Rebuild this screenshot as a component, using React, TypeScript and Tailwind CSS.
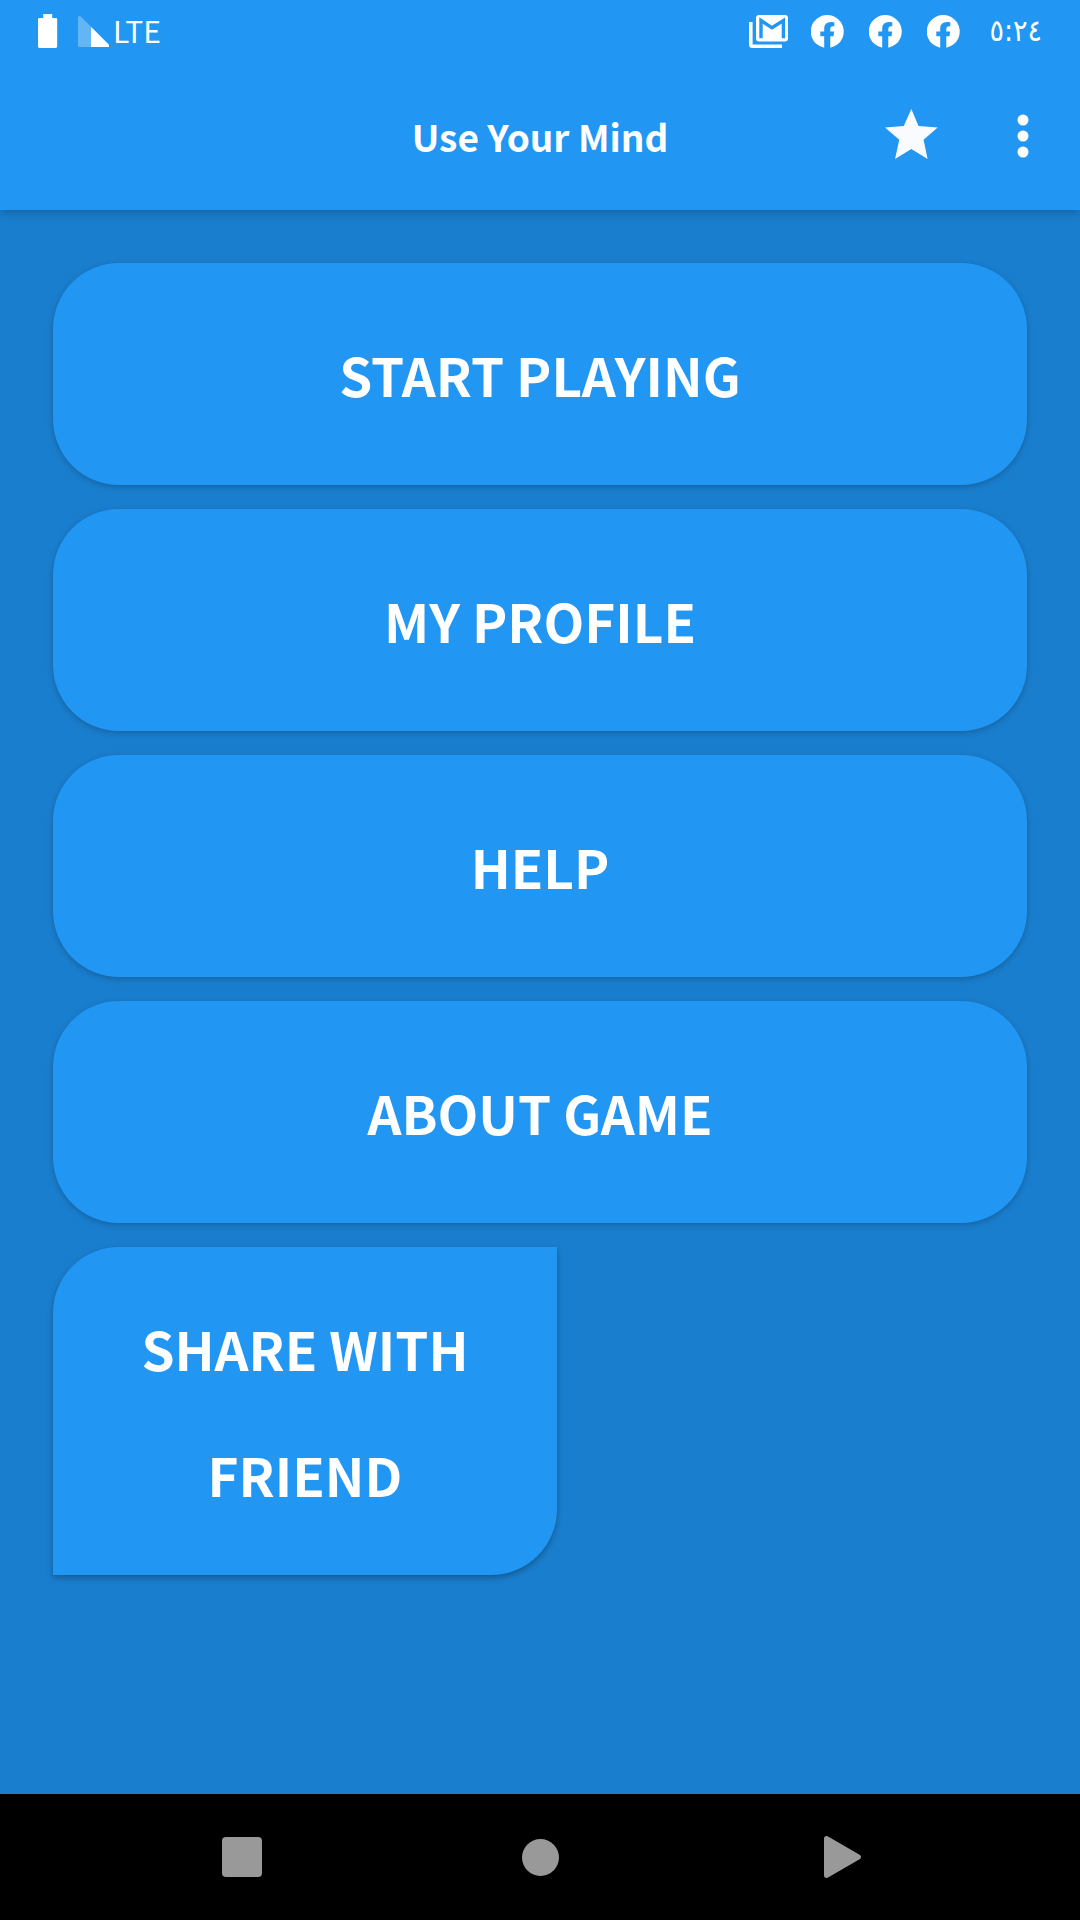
import React from 'react';

interface MenuItem {
  key: string;
  label: string;
}

const menuItems: MenuItem[] = [
  { key: 'play', label: 'START PLAYING' },
  { key: 'profile', label: 'MY PROFILE' },
  { key: 'help', label: 'HELP' },
  { key: 'about', label: 'ABOUT GAME' },
];

const notifications = ['first', 'second', 'third'];

const BatteryIcon = () => (
  <svg viewBox="0 0 20 34" className="w-5 h-[34px] fill-white" aria-hidden="true">
    <path d="M5.2 0h9v4h3.6q1.4 0 1.4 1.4v27.2q0 1.4-1.4 1.4H1.4Q0 34 0 32.600V5.400Q0 4 1.400 4h3.800z" />
  </svg>
);

const SignalIcon = () => (
  <svg viewBox="0 0 31 31" className="w-[31px] h-[31px] fill-white" aria-hidden="true">
    <path d="M0 1.500Q0 0 1.500 0Q2.300 0 3 .7L13 10.700V31H1.500Q0 31 0 29.500z" opacity="0.3" />
    <path d="M13 10.700L30.500 28.200Q31 28.800 31 29.500V31H13z" />
  </svg>
);

const MailStackIcon = () => (
  <svg viewBox="0 0 39 33" className="w-[39px] h-[33px]" aria-hidden="true">
    <path d="M1.800 7v22.500q0 1.700 1.700 1.700H33" fill="none" stroke="white" strokeWidth="3.600" />
    <rect x="7" width="32" height="26.500" rx="3" fill="white" />
    <path d="M12 23.300V5.500L23 12.800L34.400 5.500V23.300" fill="none" stroke="#2196f3" strokeWidth="3.400" />
  </svg>
);

const FacebookIcon = () => (
  <svg viewBox="0 0 33 33" className="w-[33px] h-[33px] fill-white" aria-hidden="true">
    <path d="M13.200 32.700A16.500 16.500 0 1 1 19.300 32.700V21.200H22.500L23.200 16.600H19.300V14.200Q19.300 11.300 22 11.300H23.300V7.200Q21.800 6.900 20 6.900Q13.200 6.900 13.200 13.600V16.600H9.300V21.200H13.200z" />
  </svg>
);

const StatusBar = () => (
  <div className="h-[63px] px-[38px] pb-3 flex items-end justify-between">
    <div className="h-10 flex items-center">
      <BatteryIcon />
      <span className="ml-5">
        <SignalIcon />
      </span>
      <span className="ml-1 pb-[2px] text-[30px] leading-9 font-['Noto_Sans_CJK_SC',sans-serif]">LTE</span>
    </div>
    <div className="h-10 flex items-center">
      <MailStackIcon />
      <div className="ml-[23px] mr-[29px] flex gap-[25px]">
        {notifications.map((id) => (
          <FacebookIcon key={id} />
        ))}
      </div>
      <time className="text-[30px] leading-9 font-['DejaVu_Sans_Condensed','DejaVu_Sans',sans-serif]">٥:٢٤</time>
    </div>
  </div>
);

const AppBar = () => (
  <div className="h-[147px] px-8 grid grid-cols-[1fr_auto_1fr] items-center">
    <h1 className="col-start-2 pb-[2px] text-[37px] leading-[48px] font-bold">Use Your Mind</h1>
    <div className="pb-[2px] flex items-center justify-end gap-[60px]">
      <button type="button" aria-label="Rate" className="w-[54px] h-[54px] flex justify-center">
        <svg viewBox="136 89 158 149" className="w-[53px] h-[50px] fill-[#fafbff]">
          <path d="M214.500 89L236 140L293 144L251 181L263 238L214.500 208L166 238L178.500 181L136 144L192 140z" />
        </svg>
      </button>
      <button type="button" aria-label="More options" className="w-[50px] h-[54px] flex items-center justify-center">
        <svg viewBox="0 0 12 44" className="w-3 h-11 fill-white">
          <circle cx="6" cy="6" r="5.500" />
          <circle cx="6" cy="22" r="5.500" />
          <circle cx="6" cy="38" r="5.500" />
        </svg>
      </button>
    </div>
  </div>
);

const NavigationBar = () => (
  <nav className="h-[126px] bg-black flex items-center justify-center gap-[198px]">
    <button type="button" aria-label="Recent apps" className="w-[100px] h-20 flex items-center justify-center">
      <span className="w-10 h-10 rounded-[4px] bg-[#999999]" />
    </button>
    <button type="button" aria-label="Home" className="w-[100px] h-20 flex items-center justify-center">
      <span className="w-[37px] h-[37px] rounded-full bg-[#999999]" />
    </button>
    <button type="button" aria-label="Back" className="w-[100px] h-20 flex items-center justify-center">
      <svg viewBox="-10 0 48 42" className="w-12 h-[42px] fill-[#999999]">
        <path d="M0 3Q0 0 2.500 0Q3.500 0 4.500 .8L36 19Q38 21 36 23L4.500 41.200Q3.500 42 2.500 42Q0 42 0 39z" />
      </svg>
    </button>
  </nav>
);

const App: React.FC = () => {
  return (
    <div className="min-h-screen flex flex-col bg-[#1a7ece] text-white font-['Noto_Sans_CJK_SC',sans-serif]">
      <header className="bg-[#2196f3] shadow-[0_2px_10px_rgba(0,0,0,0.25)]">
        <StatusBar />
        <AppBar />
      </header>

      <main className="flex-1 px-[53px] pt-[53px] pb-6 flex flex-col gap-6">
        {menuItems.map((item) => (
          <button
            key={item.key}
            type="button"
            className="h-[222px] rounded-[66px] bg-[#2196f3] shadow-[0_2px_6px_rgba(0,0,0,0.22)] text-[53px] leading-[126px] font-bold"
          >
            {item.label}
          </button>
        ))}
        <button
          type="button"
          className="self-start w-[504px] px-10 py-[38px] rounded-tl-[66px] rounded-br-[66px] bg-[#2196f3] shadow-[0_3px_6px_rgba(0,0,0,0.28)] text-[53px] leading-[126px] font-bold"
        >
          SHARE WITH FRIEND
        </button>
      </main>

      <NavigationBar />
    </div>
  );
};

export default App;
